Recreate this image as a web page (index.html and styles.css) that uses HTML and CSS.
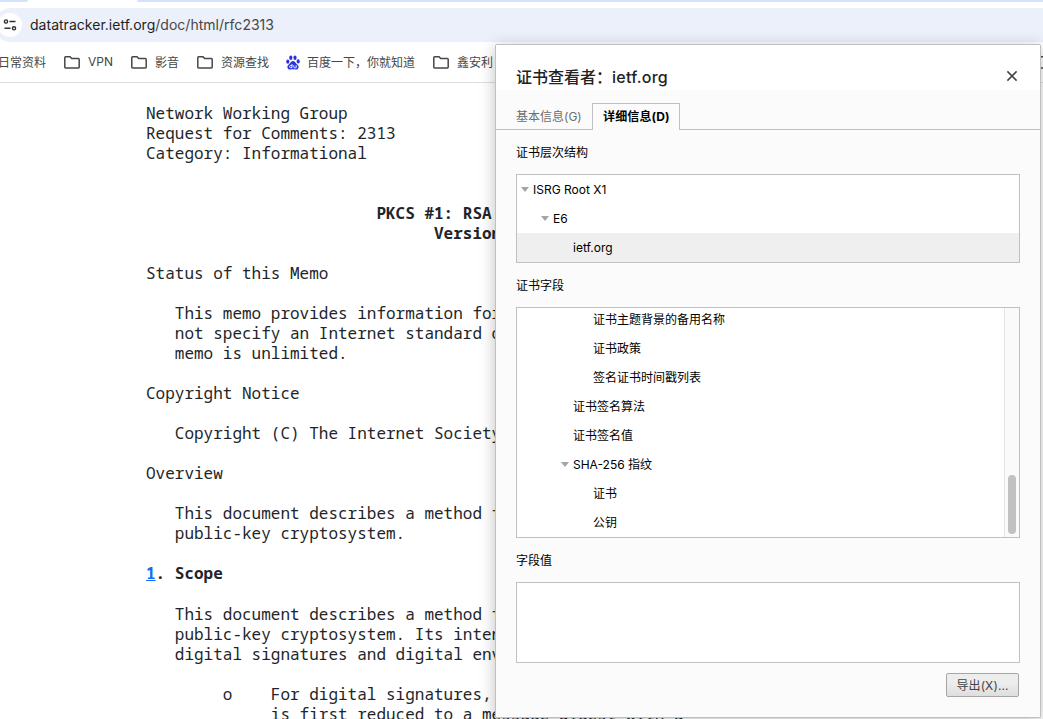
FILE: index.html
```html
<!DOCTYPE html>
<html lang="zh-CN">
<head>
<meta charset="utf-8">
<title>rfc2313</title>
<link rel="stylesheet" href="styles.css">
</head>
<body>
<div class="tabstrip"><span class="tab-left"></span><span class="tab-right"></span></div>
<div class="toolbar">
  <div class="omnibox">
    <span class="site-info"><svg width="14" height="14" viewBox="0 0 14 14" fill="none" stroke="#303134" stroke-width="1.4"><circle cx="3" cy="3.5" r="1.6"/><path d="M6.5 3.5H12.5M1.5 10.3H7.5"/><circle cx="11" cy="10.3" r="1.6"/></svg></span>
    <span class="url">datatracker.ietf.org<span class="path">/doc/html/rfc2313</span></span>
  </div>
</div>
<nav class="bookmarks">
  <span class="bm bm-first">日常资料</span>
  <span class="bm bm-vpn"><svg class="folder" viewBox="0 0 16 13"><path d="M.8 11.3V1.6Q.8.8 1.6.8H6L7.7 2.6H14.4Q15.2 2.6 15.2 3.4V11.3Q15.2 12 14.4 12H1.6Q.8 12 .8 11.3Z"/></svg>VPN</span>
  <span class="bm bm-media"><svg class="folder" viewBox="0 0 16 13"><path d="M.8 11.3V1.6Q.8.8 1.6.8H6L7.7 2.6H14.4Q15.2 2.6 15.2 3.4V11.3Q15.2 12 14.4 12H1.6Q.8 12 .8 11.3Z"/></svg>影音</span>
  <span class="bm bm-search"><svg class="folder" viewBox="0 0 16 13"><path d="M.8 11.3V1.6Q.8.8 1.6.8H6L7.7 2.6H14.4Q15.2 2.6 15.2 3.4V11.3Q15.2 12 14.4 12H1.6Q.8 12 .8 11.3Z"/></svg>资源查找</span>
  <span class="bm bm-baidu"><svg class="paw" viewBox="0 0 14 15"><g fill="#2932e1"><ellipse cx="1.8" cy="6.7" rx="1.6" ry="2.1"/><ellipse cx="4.8" cy="2.8" rx="1.6" ry="2.2"/><ellipse cx="9" cy="2.8" rx="1.6" ry="2.2"/><ellipse cx="12.2" cy="6.4" rx="1.6" ry="2.1"/><path d="M7 6C8.7 6 9.2 7.6 10.4 8.7C12 10 12.9 11 12.5 12.7C12 14.6 10.2 14.6 7 14.3C3.8 14.6 2 14.6 1.5 12.7C1.1 11 2 10 3.6 8.7C4.8 7.6 5.3 6 7 6Z"/></g><path d="M6 9V12.7H4.6Q3.6 12.7 3.6 11.6T4.6 10.5H6M7.8 10.2V12Q7.8 12.8 8.6 12.8H10.2V10.2" fill="none" stroke="#fff" stroke-width=".9"/></svg>百度一下，你就知道</span>
  <span class="bm bm-last"><svg class="folder" viewBox="0 0 16 13"><path d="M.8 11.3V1.6Q.8.8 1.6.8H6L7.7 2.6H14.4Q15.2 2.6 15.2 3.4V11.3Q15.2 12 14.4 12H1.6Q.8 12 .8 11.3Z"/></svg>鑫安利</span>
  <svg class="folder folder-edge" viewBox="0 0 16 13"><path d="M.8 11.3V1.6Q.8.8 1.6.8H6L7.7 2.6H14.4Q15.2 2.6 15.2 3.4V11.3Q15.2 12 14.4 12H1.6Q.8 12 .8 11.3Z"/></svg>
</nav>
<main class="rfc">
<pre class="front">Network Working Group
Request for Comments: 2313
Category: Informational


                        <b>PKCS #1: RSA</b>
                              <b>Version</b>

Status of this Memo

   This memo provides information for
   not specify an Internet standard of
   memo is unlimited.

Copyright Notice

   Copyright (C) The Internet Society

Overview

   This document describes a method for
   public-key cryptosystem.

<b><a class="section" href="#">1</a>. Scope</b>
</pre>
<pre class="body-text">   This document describes a method for
   public-key cryptosystem. Its intended
   digital signatures and digital envelopes

        o    For digital signatures,
             is first reduced to a message digest with a
</pre>
</main>
<section class="dialog">
  <header class="dialog-head">
    <h1 class="dialog-title">证书查看者：<span class="host">ietf.org</span></h1>
    <svg class="close" width="12" height="12" viewBox="0 0 12 12"><path d="M1.4 1.4L10.6 10.6M10.6 1.4L1.4 10.6" stroke="#444" stroke-width="1.5"/></svg>
  </header>
  <div class="tabs">
    <span class="tab tab-general">基本信息(G)</span>
    <span class="tab tab-active">详细信息(D)</span>
  </div>
  <div class="panel">
    <div class="label">证书层次结构</div>
    <div class="box hierarchy">
      <div class="row d0"><i class="arrow"></i>ISRG Root X1</div>
      <div class="row d1"><i class="arrow"></i>E6</div>
      <div class="row d2 selected">ietf.org</div>
    </div>
    <div class="label">证书字段</div>
    <div class="box fields">
      <div class="list">
        <div class="row d3">证书主题背景的备用名称</div>
        <div class="row d3">证书政策</div>
        <div class="row d3">签名证书时间戳列表</div>
        <div class="row d2">证书签名算法</div>
        <div class="row d2">证书签名值</div>
        <div class="row d2"><i class="arrow"></i>SHA-256 指纹</div>
        <div class="row d3">证书</div>
        <div class="row d3">公钥</div>
      </div>
      <div class="scrollbar"><div class="thumb"></div></div>
    </div>
    <div class="label">字段值</div>
    <div class="box value"></div>
    <div class="actions"><button class="export">导出(X)...</button></div>
  </div>
</section>
</body>
</html>
```
FILE: styles.css
```css
* { box-sizing: border-box; }
body {
  margin: 0;
  width: 1043px;
  height: 719px;
  overflow: hidden;
  position: relative;
  background: #fff;
  font-family: Inter, "Noto Sans CJK SC", sans-serif;
  font-size: 12px;
}
.tabstrip { display: flex; justify-content: space-between; height: 2px; }
.tab-left { width: 28px; background: #d3e3fd; border-bottom-right-radius: 3px 2px; }
.tab-right { width: 906px; background: #d3e3fd; border-bottom-left-radius: 3px 2px; }
.toolbar { padding-top: 6px; }
.omnibox {
  height: 34px;
  margin-left: -6px;
  border-radius: 17px 0 0 17px;
  background: #ecf0fa;
  display: flex;
  align-items: center;
}
.site-info {
  width: 24px;
  height: 24px;
  margin: 0 8px 0 4px;
  border-radius: 50%;
  background: #fff;
  display: flex;
  align-items: center;
  justify-content: center;
}
.url { font-size: 14px; letter-spacing: .02px; padding-bottom: 2px; color: #1f1f1f; white-space: nowrap; }
.path { color: #474747; }
.bookmarks {
  height: 41px;
  border-bottom: 1px solid #dedede;
  display: flex;
  align-items: center;
  color: #444746;
  white-space: nowrap;
  overflow: hidden;
}
.bm { display: flex; align-items: center; flex: none; height: 20px; padding-bottom: 2px; }
.bm-first { width: 66px; margin-left: -2px; }
.bm-vpn { width: 67px; }
.bm-media { width: 66px; }
.bm-search { width: 89px; }
.bm-baidu { width: 147px; }
.bm-last { width: 608px; }
.folder {
  width: 16px;
  height: 13px;
  flex: none;
  margin: 2px 8px 0 0;
  fill: none;
  stroke: #474747;
  stroke-width: 1.5;
}
.paw { width: 14px; height: 15px; margin: 2px 7px 0 0; }
.folder-edge { margin: 1px 0 0 -3px; }
.rfc { padding: 20px 0 0 146px; }
.front, .body-text {
  margin: 0;
  font-family: "Noto Sans Mono", "DejaVu Sans Mono", monospace;
  font-size: 16px;
  line-height: 20px;
  color: #212529;
}
.body-text { margin-top: 21px; }
.section { color: #0d6efd; }
.dialog {
  position: absolute;
  left: 495px;
  top: 44px;
  width: 546px;
  height: 674px;
  border: 1px solid #c0c0c0;
  border-radius: 2px 2px 0 0;
  background: #fbfbfb;
  box-shadow: 0 3px 16px rgba(0, 0, 0, .25);
  color: #000;
}
.dialog-head {
  height: 45px;
  padding: 10px 22px 0 20px;
  background: #fff;
  display: flex;
  align-items: center;
  justify-content: space-between;
}
.dialog-title { margin: 0; padding-top: 8px; font-size: 16px; line-height: 24px; font-weight: 500; color: #222; }
.host { letter-spacing: .25px; }
.close { margin-top: 7px; }
.tabs {
  height: 40px;
  padding: 13px 0 0 20px;
  border-bottom: 1px solid #c0c0c0;
  display: flex;
}
.tab { height: 27px; line-height: 26px; white-space: nowrap; }
.tab-general { width: 76px; padding-top: 1px; color: #6e6e6e; }
.tab-active {
  width: 88px;
  border: 1px solid #c0c0c0;
  border-bottom: 0;
  background: #fbfbfb;
  padding-left: 10px;
  letter-spacing: .15px;
  font-weight: 700;
}
.panel { padding: 0 20px; }
.label { height: 44px; padding-top: 13px; line-height: 20px; }
.box { border: 1px solid #c0c0c0; background: #fff; }
.hierarchy { height: 89px; }
.row { height: 29px; line-height: 29px; position: relative; white-space: nowrap; }
.d0 { padding-left: 16px; }
.d1 { padding-left: 36px; }
.d2 { padding-left: 56px; }
.d3 { padding-left: 76px; }
.selected { background: #efefef; }
.arrow {
  display: inline-block;
  width: 8px;
  height: 5px;
  margin: 0 4px 2px -12px;
  background: #a4a4a4;
  clip-path: polygon(0 0, 100% 0, 50% 100%);
}
.fields { height: 231px; overflow: hidden; display: flex; }
.list { flex: 1; margin-top: -3px; }
.scrollbar {
  width: 15px;
  border-left: 1px solid #e4e4e4;
  background: #fafafa;
  padding: 167px 3px 0;
}
.thumb { width: 8px; height: 59px; border-radius: 4px; background: #c1c1c1; }
.value { height: 81px; }
.actions { display: flex; justify-content: flex-end; padding: 10px 1px 0 0; }
.export {
  width: 73px;
  height: 24px;
  padding: 0 0 2px;
  border: 1px solid #a6a6a6;
  border-radius: 2px;
  background: linear-gradient(#ededed 38%, #dedede);
  font: inherit;
  letter-spacing: .1px;
  color: #444;
}
```
